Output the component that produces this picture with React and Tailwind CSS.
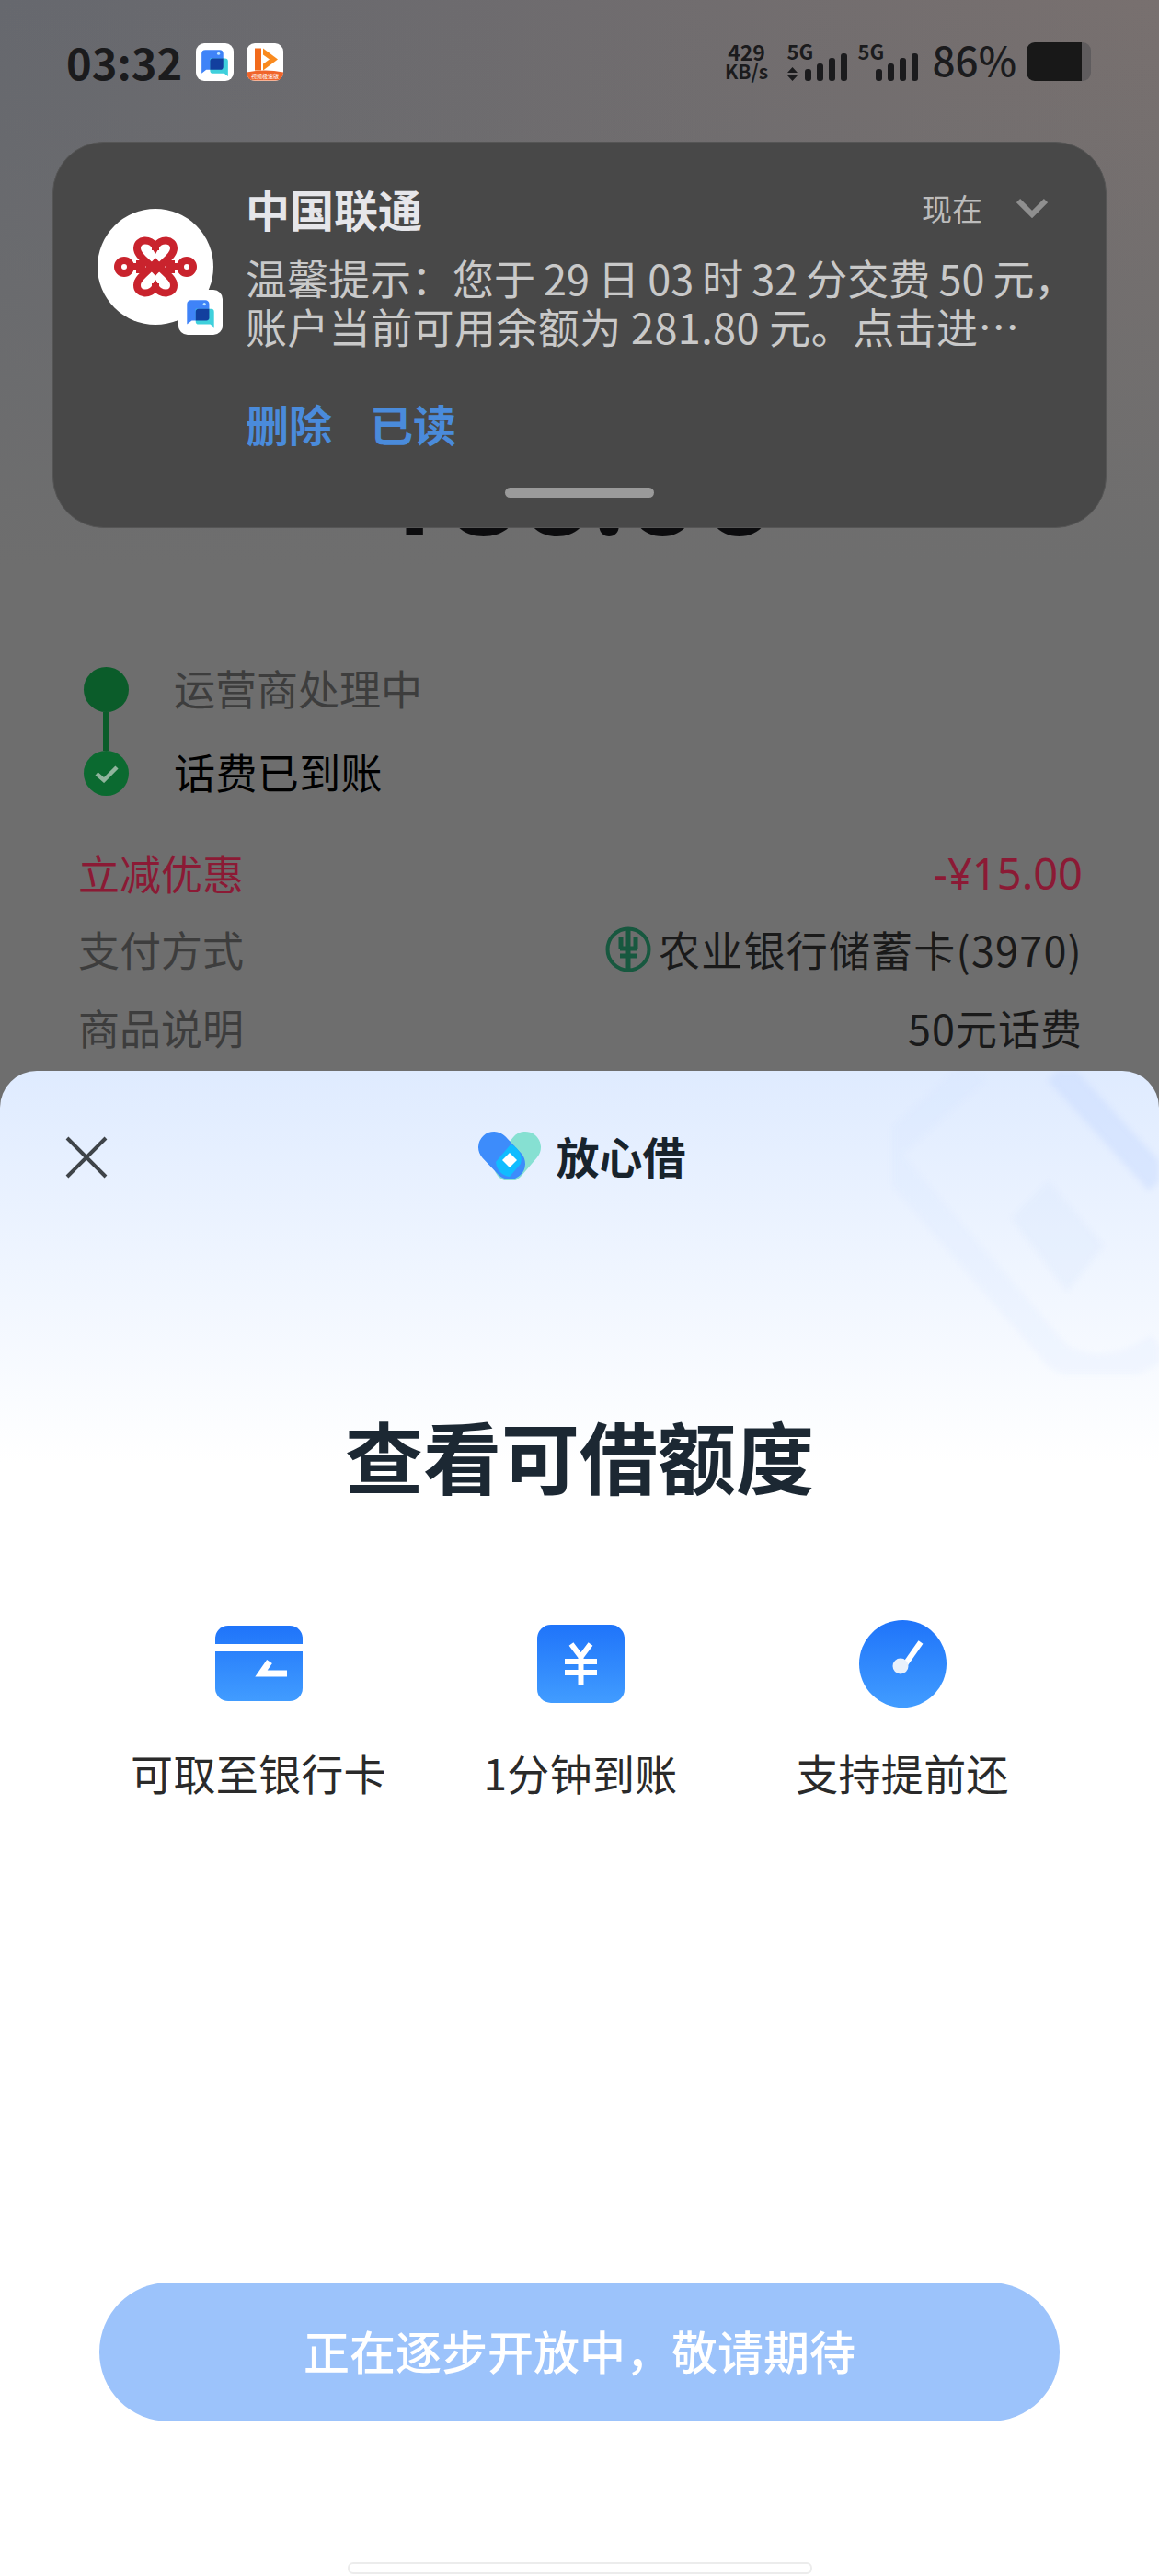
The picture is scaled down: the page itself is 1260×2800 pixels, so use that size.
import React from 'react'

const cjk = "font-['Noto_Sans_CJK_SC','Noto_Sans',sans-serif]"

function ChatIcon({ className }) {
  return (
    <svg viewBox="0 0 40 40" className={className}>
      <path d="M6 11a4 4 0 0 1 4-4h15a4 4 0 0 1 4 4v13a4 4 0 0 1-4 4H11l-5 4z" fill="#3f83f8" />
      <path d="M34 19a3 3 0 0 0-3-3H15v13a3 3 0 0 0 3 3h12l4 3z" fill="#3fd0dc" />
      <path d="M15 19a3 3 0 0 1 3-3h11v9a3 3 0 0 1-3 3H15z" fill="#123f9e" />
      <circle cx="24" cy="11" r="1.5" fill="#bfe6ff" />
    </svg>
  )
}

function VideoIcon({ className }) {
  return (
    <div className={`${className} relative overflow-hidden bg-white`}>
      <svg viewBox="0 0 40 40" className="w-full h-full">
        <path d="M9 5h7v24H9z" fill="#f26a1b" />
        <path d="M18 5l16 12-16 12z" fill="#f98a1f" />
        <path d="M18 12l7 5-7 5z" fill="#fff" />
        <path d="M0 31q20-4 40 0v9H0z" fill="#f0642a" />
      </svg>
      <div className={`absolute bottom-[2px] left-0 right-0 text-center text-[6px] leading-[7px] text-white ${cjk}`}>视频极速版</div>
    </div>
  )
}

function UnicomKnot() {
  return (
    <svg viewBox="0 0 90 68" className="w-[90px] h-[68px]" fill="none" stroke="#c9232d" strokeWidth="8">
      <path d="M45 12C40 3 25 3 25 14C25 21 33 26 45 38C57 26 65 21 65 14C65 3 50 3 45 12Z" />
      <path d="M45 56C40 65 25 65 25 54C25 47 33 42 45 30C57 42 65 47 65 54C65 65 50 65 45 56Z" />
      <circle cx="11" cy="34" r="7" />
      <circle cx="79" cy="34" r="7" />
      <path d="M18 34H34M72 34H56M28 27v14M62 27v14M45 8v8M45 52v8" />
    </svg>
  )
}

function Bars({ tall }) {
  return (
    <div className="flex items-end gap-[6px]">
      {tall.map((h, i) => (
        <div key={i} className="w-[7px] bg-[#1b1b1d] rounded-[3px]" style={{ height: h }} />
      ))}
    </div>
  )
}

function StatusBar() {
  return (
    <div className="absolute top-0 left-0 right-0 h-[136px] flex justify-between pl-[72px] pr-[74px] pt-[46px] text-[#1b1b1d]">
      <div className="flex gap-[14px] h-[42px] items-center">
        <span className={`text-[47px] leading-[42px] font-semibold w-[127px] ${cjk}`}>03:32</span>
        <ChatIcon className="w-[41px] h-[41px] bg-white rounded-[9px]" />
        <VideoIcon className="w-[40px] h-[41px] rounded-[9px]" />
      </div>
      <div className="flex items-end h-[42px]">
        <div className={`w-[52px] text-center font-bold text-[21px] leading-[21px] ${cjk}`}>
          <div className="text-[23px]">429</div>
          <div>KB/s</div>
        </div>
        <div className="ml-[18px] relative w-[65px] h-[42px]">
          <div className={`absolute top-[-1px] left-0 text-[22px] leading-[20px] font-bold ${cjk}`}>5G</div>
          <svg viewBox="0 0 11 15" className="absolute left-0 bottom-0 w-[11px] h-[15px]" fill="#1b1b1d">
            <path d="M5.500 0L11 6H0zM5.500 15L0 9h11z" />
          </svg>
          <div className="absolute right-0 bottom-0"><Bars tall={[13, 19, 25, 30]} /></div>
        </div>
        <div className="ml-[12px] relative w-[65px] h-[42px]">
          <div className={`absolute top-[-1px] left-0 text-[22px] leading-[20px] font-bold ${cjk}`}>5G</div>
          <div className="absolute right-0 bottom-0"><Bars tall={[13, 19, 25, 30]} /></div>
        </div>
        <span className={`ml-[16px] mb-[3px] text-[44px] leading-[42px] font-medium ${cjk}`}>86%</span>
        <div className="ml-[11px] w-[70px] h-[42px] rounded-[9px] overflow-hidden bg-[#5f5c5e] flex">
          <div className="w-[60px] h-full bg-[#181818]" />
        </div>
      </div>
    </div>
  )
}

function Notification() {
  return (
    <div className={`absolute left-[57px] top-[154px] w-[1146px] h-[420px] rounded-[56px] bg-[#484848] border border-[#555555] ${cjk}`}>
      <div className="flex pl-[48px] pt-[46px]">
        <div className="relative w-[126px] h-[126px] mt-[26px] rounded-full bg-white flex items-center justify-center shrink-0">
          <UnicomKnot />
          <div className="absolute left-[88px] top-[88px] w-[48px] h-[49px] bg-white rounded-[10px] flex items-center justify-center">
            <ChatIcon className="w-[42px] h-[42px]" />
          </div>
        </div>
        <div className="ml-[35px] flex-1 min-w-0 pr-[60px]">
          <div className="flex items-center justify-between h-[50px]">
            <span className="text-[48px] leading-[50px] font-bold text-[#e6e6ea]">中国联通</span>
            <div className="flex items-center">
              <span className="text-[33px] leading-[40px] text-[#bcbcbc]">现在</span>
              <svg viewBox="0 0 34 22" className="w-[34px] h-[22px] ml-[37px] mr-[3px]" fill="none" stroke="#8f8f8f" strokeWidth="6">
                <path d="M2 3l15 15L32 3" />
              </svg>
            </div>
          </div>
          <div className="mt-[24px] text-[45px] leading-[53px] text-[#c9c9c9] whitespace-nowrap">
            <div className="[word-spacing:-1px]">温馨提示：您于 29 日 03 时 32 分交费 50 元，</div>
            <div className="tracking-[0.4px]">账户当前可用余额为 281.80 元。点击进⋯</div>
          </div>
          <div className="mt-[51px] flex gap-[41px] text-[47px] leading-[56px] font-bold text-[#4a8bdb]">
            <span>删除</span>
            <span>已读</span>
          </div>
        </div>
      </div>
      <div className="absolute left-[491px] top-[375px] w-[162px] h-[11px] rounded-full bg-[#9a9a9a]" />
    </div>
  )
}

function Row({ label, labelColor = 'text-[#3d3d3d]', children, className }) {
  return (
    <div className={`flex items-center justify-between h-[60px] pl-[85px] pr-[83px] ${className}`}>
      <span className={`text-[45px] leading-[60px] ${labelColor}`}>{label}</span>
      {children}
    </div>
  )
}

function Background() {
  return (
    <div className={`h-[1164px] ${cjk}`}>
      <div className={`pt-[478px] h-[600px] text-center text-[#0c0c0e] font-bold text-[125px] leading-[118px] tracking-[-1px] font-['Inter',sans-serif]`}>
        ¥35.00
      </div>
      <div className="pl-[91px] pt-[125px]">
        <div className="flex items-center h-[49px]">
          <div className="w-[49px] h-[49px] rounded-full bg-[#0b5c2a]" />
          <span className="ml-[49px] -mt-[4px] text-[45px] leading-[49px] text-[#3d3d3d]">运营商处理中</span>
        </div>
        <div className="w-[6px] h-[42px] ml-[21px] bg-[#0b5c2a]" />
        <div className="flex items-center h-[49px]">
          <div className="w-[49px] h-[49px] rounded-full bg-[#0b6a30] flex items-center justify-center">
            <svg viewBox="0 0 26 20" className="w-[26px] h-[20px]" fill="none" stroke="#8fb49c" strokeWidth="4.5">
              <path d="M2 10l8 7L24 3" />
            </svg>
          </div>
          <span className="ml-[49px] -mt-[4px] text-[45px] leading-[49px] text-black tracking-[0.4px]">话费已到账</span>
        </div>
      </div>
      <div className="mt-[54px]">
        <Row label="立减优惠" labelColor="text-[#8b1a35]">
          <span className={`text-[47px] leading-[60px] text-[#8b1a35] font-['Noto_Sans',sans-serif]`}>-¥15.00</span>
        </Row>
        <Row label="支付方式" className="mt-[23px]">
          <div className="flex items-center text-[#1a1a1a] text-[45px] leading-[60px] tracking-[1.2px]">
            <svg viewBox="0 0 50 50" className="w-[50px] h-[50px] mr-[8px]" fill="none" stroke="#17583f">
              <circle cx="25" cy="25" r="22.500" strokeWidth="4" />
              <path d="M25 3v44M16 24h18M16 32h18M17 11v13M33 11v13" strokeWidth="5" />
            </svg>
            <span>农业银行储蓄卡(3970)</span>
          </div>
        </Row>
        <Row label="商品说明" className="mt-[25px]">
          <span className="text-[#1a1a1a] text-[45px] leading-[60px] tracking-[1px]">50元话费</span>
        </Row>
      </div>
    </div>
  )
}

function CardIcon() {
  return (
    <svg viewBox="0 0 95 82" className="w-[95px] h-[82px]">
      <defs>
        <linearGradient id="cardFill" gradientUnits="userSpaceOnUse" x1="0" y1="0" x2="0" y2="82">
          <stop offset="0" stopColor="#1f74fa" />
          <stop offset="1" stopColor="#419cff" />
        </linearGradient>
      </defs>
      <path d="M0 20V14A14 14 0 0 1 14 0H81A14 14 0 0 1 95 14V20Z" fill="url(#cardFill)" />
      <path d="M0 28H95V68A14 14 0 0 1 81 82H14A14 14 0 0 1 0 68Z" fill="url(#cardFill)" />
      <path d="M59 39L50 52H78" fill="none" stroke="#fff" strokeWidth="7" />
    </svg>
  )
}

function YuanIcon() {
  return (
    <svg viewBox="0 0 95 85" className="w-[95px] h-[85px]">
      <defs>
        <linearGradient id="yuanFill" x1="0" y1="0" x2="0" y2="1">
          <stop offset="0" stopColor="#1f74fa" />
          <stop offset="1" stopColor="#419cff" />
        </linearGradient>
      </defs>
      <rect width="95" height="85" rx="15" fill="url(#yuanFill)" />
      <path d="M37 21L47.500 35L58 21M30 40H65M30 52H65M47.500 35V65" fill="none" stroke="#fff" strokeWidth="6" />
    </svg>
  )
}

function GaugeIcon() {
  return (
    <svg viewBox="0 0 95 95" className="w-[95px] h-[95px]">
      <defs>
        <linearGradient id="gaugeFill" x1="0" y1="0" x2="0" y2="1">
          <stop offset="0" stopColor="#1f74fa" />
          <stop offset="1" stopColor="#419cff" />
        </linearGradient>
      </defs>
      <circle cx="47.500" cy="47.500" r="47.500" fill="url(#gaugeFill)" />
      <path d="M67 24L48 51" stroke="#fff" strokeWidth="6" />
      <circle cx="45" cy="50" r="8.500" fill="#e8f0fb" />
    </svg>
  )
}

function Logo() {
  return (
    <svg viewBox="0 0 70 54" className="w-[70px] h-[54px]">
      <path d="M52 18L35 38" stroke="#86e0d2" strokeWidth="34" strokeLinecap="round" />
      <path d="M18 18L35 36" stroke="#3d8cfb" strokeWidth="34" strokeLinecap="round" />
      <path d="M36 15A17 17 0 0 1 47 36L35 50A17 17 0 0 1 20 34Z" fill="#10bcff" />
      <path d="M35 24l8 8-8 8-8-8z" fill="#fff" />
    </svg>
  )
}

function Sheet() {
  const features = [
    { icon: <CardIcon />, label: '可取至银行卡' },
    { icon: <YuanIcon />, label: '1分钟到账' },
    { icon: <GaugeIcon />, label: '支持提前还' },
  ]
  return (
    <div className={`absolute left-0 right-0 top-[1164px] bottom-0 rounded-t-[40px] overflow-hidden bg-linear-to-b from-[#dfebff] to-white to-[26%] ${cjk}`}>
      {/* faint watermark, top right */}
      <svg viewBox="0 0 290 330" className="absolute right-0 top-0 w-[290px] h-[330px] blur-[3px]" fill="none" strokeLinejoin="round">
        <path d="M90 0L-10 90L180 310Q230 340 290 300" stroke="#cfdffc" strokeWidth="30" opacity="0.16" />
        <path d="M180 0L290 120" stroke="#c9dcff" strokeWidth="30" opacity="0.5" />
        <path d="M130 160L170 120L230 190L190 240Z" fill="#d5e3fb" opacity="0.25" />
      </svg>

      <div className="relative flex items-center justify-center h-[188px]">
        <svg viewBox="0 0 46 46" className="absolute left-[71px] top-[71px] w-[46px] h-[46px]" fill="none" stroke="#3f4449" strokeWidth="4">
          <path d="M2 2L44 44M44 2L2 44" />
        </svg>
        <div className="ml-[4px] flex items-center -mt-[4px]">
          <Logo />
          <span className="ml-[16px] text-[47px] leading-[56px] font-bold text-[#18232c]">放心借</span>
        </div>
      </div>

      <h1 className="relative mt-[181px] text-center text-[85px] leading-[96px] font-bold text-[#1c2833]">查看可借额度</h1>

      <div className="grid grid-cols-[350px_350px_350px] ml-[106px] mt-[131px]">
        {features.map((f) => (
          <div key={f.label} className="flex flex-col items-center">
            <div className="h-[96px] flex items-center justify-center">{f.icon}</div>
            <div className="mt-[42px] text-[46px] leading-[56px] text-[#2a2a2a] whitespace-nowrap tracking-[0.3px]">{f.label}</div>
          </div>
        ))}
      </div>

      <div className="mx-[108px] mt-[527px] h-[151px] rounded-full bg-[#9cc3fb] flex items-center justify-center pb-[5px] text-white text-[50px] font-medium">
        正在逐步开放中，敬请期待
      </div>

      <div className="absolute left-[378px] top-[1621px] w-[505px] h-[13px] rounded-[6px] bg-white border-2 border-[#ececec]" />
    </div>
  )
}

export default function App() {
  return (
    <div className="relative w-[1260px] h-[2800px] overflow-hidden bg-[linear-gradient(180deg,transparent_0,#6e6e6e_22%),linear-gradient(90deg,#66686e,#78706f)]">
      <Background />
      <StatusBar />
      <Notification />
      <Sheet />
    </div>
  )
}
